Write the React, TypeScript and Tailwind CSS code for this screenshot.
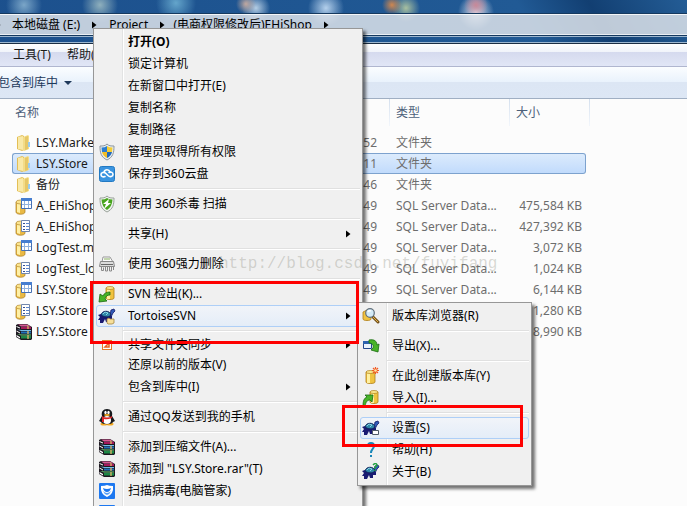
import type { ReactNode } from "react";

type FileKind = "folder" | "mdf" | "ldf" | "rar";

type FileRow = { name: string; time: string; kind: FileKind; type: string; size?: string; selected?: boolean };

type Entry = {
  label: string;
  icon?: ReactNode;
  submenu?: boolean;
  bold?: boolean;
  active?: boolean;
  compact?: boolean;
};

const FILES: FileRow[] = [
  { name: "LSY.Market", time: "52", kind: "folder", type: "文件夹" },
  { name: "LSY.Store", time: "11", kind: "folder", type: "文件夹", selected: true },
  { name: "备份", time: "46", kind: "folder", type: "文件夹" },
  { name: "A_EHiShop", time: "49", kind: "mdf", type: "SQL Server Data...", size: "475,584 KB" },
  { name: "A_EHiShop", time: "49", kind: "ldf", type: "SQL Server Data...", size: "427,392 KB" },
  { name: "LogTest.mdf", time: "49", kind: "mdf", type: "SQL Server Data...", size: "3,072 KB" },
  { name: "LogTest_log", time: "49", kind: "ldf", type: "SQL Server Data...", size: "1,024 KB" },
  { name: "LSY.Store", time: "49", kind: "mdf", type: "SQL Server Data...", size: "6,144 KB" },
  { name: "LSY.Store", time: "", kind: "ldf", type: "", size: "1,280 KB" },
  { name: "LSY.Store", time: "", kind: "rar", type: "", size: "8,990 KB" },
];

const ICON_CLS = "block h-[18px] w-[18px] shrink-0";

function FolderIcon() {
  return (
    <svg className={ICON_CLS} viewBox="0 0 18 18">
      <path d="M2 3l5-2 2 1v14l-2 1-5-2z" fill="#e3bf56" />
      <path d="M3 3l5-1v14l-5-1z" fill="#f9e9a8" />
      <path d="M8 3l5-2 1 1v13l-5 2-1-1z" fill="#f3dc88" />
      <path d="M10 3l3-1v13l-3 1z" fill="#e6c767" />
      <path d="M13 8h2v5h-2z" fill="#9accee" />
    </svg>
  );
}

function DatabaseIcon({ log }: { log?: boolean }) {
  return (
    <svg className={ICON_CLS} viewBox="0 0 18 18">
      <path d="M1 5v10c0 3 9 3 9 0V5z" fill="#e9b944" stroke="#a87a20" strokeWidth=".7" />
      <path d="M2 5v10l3 1V5z" fill="#fff0a6" />
      <ellipse cx="5.5" cy="5" rx="4.5" ry="2" fill="#fbe48d" stroke="#a87a20" strokeWidth=".6" />
      {log ? (
        <>
          <path d="M6.500 2.500h8v11h-8z" fill="#fff" stroke="#7187ad" />
          <path d="M8 5.500h2M8 8.500h2M8 11.500h2" stroke="#334f96" />
          <path d="M11 5.500h3M11 8.500h3M11 11.500h3" stroke="#5a86cf" />
        </>
      ) : (
        <>
          <path d="M6.500 1.500h10v10h-10z" fill="#fff" stroke="#4570b4" />
          <path d="M6 1h11v3H6z" fill="#467ed0" />
          <path d="M7 7.500h9M9.500 4v7M13.500 4v7" stroke="#91b2df" />
        </>
      )}
    </svg>
  );
}

function RarIcon() {
  return (
    <svg className={ICON_CLS} viewBox="0 0 18 18">
      <path d="M1 2l2-1h9l5 3v12l-1 1H6l-5-3z" fill="#1c1820" />
      <path d="M3 1.500h9l4 2H6z" fill="#d65a96" />
      <path d="M6 4h10v2H6z" fill="#a31a5c" />
      <path d="M1.500 3L5 4.500v1L1.500 4z" fill="#fff" />
      <path d="M2 6.500l4 1.500h10v-1H7z" fill="#76bce5" />
      <path d="M6 8.500h10v2H6z" fill="#1e70b8" />
      <path d="M1.500 7.500L5 9.500v1L1.500 8.500z" fill="#fff" />
      <path d="M2 11l4 1.500h10v-1H7z" fill="#6bcf78" />
      <path d="M6 13h10v2.500H6z" fill="#1b8746" />
      <path d="M1.500 12L5 14v1.500l-3.500-2z" fill="#fff" />
      <path d="M12 2l2 1.500V6h-2zM12 8h2v3h-2zM12 12h2v4h-2z" fill="#dfb965" opacity=".65" />
    </svg>
  );
}

function ShieldIcon() {
  return (
    <svg className={ICON_CLS} viewBox="0 0 18 18">
      <path d="M9 1c2 2 4 2 7 2 0 7-1 11-7 14C3 14 2 10 2 3c3 0 5 0 7-2z" fill="#e7edf0" stroke="#8b959d" />
      <path d="M9 3v6H4L3.500 4.500Q7 4.500 9 3z" fill="#2b7ed1" />
      <path d="M9 3q2 1.500 5.500 1.500L14 9H9z" fill="#f5ce35" />
      <path d="M4 9h5v6q-4-2-5-6z" fill="#f3bd25" />
      <path d="M9 9h5q-1 4-5 6z" fill="#2169bb" />
    </svg>
  );
}

function CloudDiskIcon() {
  return (
    <svg className={ICON_CLS} viewBox="0 0 18 18">
      <rect x="1.500" y="1.500" width="15" height="15" rx="2" fill="#3a94e0" stroke="#2279c2" />
      <path
        d="M7 11.500c-2 1-4 0-4-2s3-3 5-1l2 2c2 2 5 1 5-1s-2-3-4-2M6 7c1-3 5-3 6 0"
        fill="none"
        stroke="#fff"
        strokeWidth="1.600"
        strokeLinecap="round"
      />
    </svg>
  );
}

function GreenShieldIcon() {
  return (
    <svg className={ICON_CLS} viewBox="0 0 18 18">
      <path d="M9 1c2 2 4 2 7 2 0 7-1 11-7 14C3 14 2 10 2 3c3 0 5 0 7-2z" fill="#eef2ee" stroke="#9aa29b" />
      <path d="M9 3q2 1.500 5.500 1.500Q14 12 9 15 4 12 3.500 4.500 7 4.500 9 3z" fill="#48a51e" />
      <path d="M11 4L5 9h3l-2 5 7-6h-3z" fill="#fff" />
    </svg>
  );
}

function ShredderIcon() {
  return (
    <svg className={ICON_CLS} viewBox="0 0 18 18">
      <path d="M4 7l1-5h7l3 5z" fill="#fafafa" stroke="#999" />
      <path d="M6 4h6" stroke="#88b060" />
      <path d="M2.500 6.500h13l1 5h-15z" fill="#dcdcdc" stroke="#888" />
      <path d="M3 9.500h12" stroke="#666" />
      <path d="M3.500 12v3.500h2v-3M7.500 12v4h2v-4M11.500 12v4h2v-4M15.500 12v3" fill="none" stroke="#888" />
    </svg>
  );
}

function Cylinder() {
  return (
    <>
      <path d="M8 3v10c0 2 8 2 8 0V3z" fill="#f0c340" stroke="#ae7c16" strokeWidth=".8" />
      <path d="M9 4h3v10H9z" fill="#fff0a0" />
      <ellipse cx="12" cy="3" rx="4" ry="1.500" fill="#fbe78d" stroke="#ae7c16" strokeWidth=".7" />
    </>
  );
}

function CheckoutIcon() {
  return (
    <svg className={ICON_CLS} viewBox="0 0 18 18">
      <Cylinder />
      <path d="M12 7c-3 0-6 1-7 4L2 9 1 17l8-1-2-2c1-3 2-4 5-4z" fill="#48b428" stroke="#1b6b12" strokeWidth=".8" />
    </svg>
  );
}

function ImportIcon() {
  return (
    <svg className={ICON_CLS} viewBox="0 0 18 18">
      <Cylinder />
      <path d="M1 17c0-5 1-8 4-9L3 6l8 0-1 7-2-2c-3 0-4 2-5 6z" fill="#48b428" stroke="#1b6b12" strokeWidth=".8" />
    </svg>
  );
}

function CreateRepoIcon() {
  return (
    <svg className={ICON_CLS} viewBox="0 0 18 18">
      <path d="M4 5v10c0 2 9 2 9 0V5z" fill="#f0c340" stroke="#ae7c16" strokeWidth=".8" />
      <path d="M5 6h3v10H5z" fill="#fff0a0" />
      <ellipse cx="8.500" cy="5" rx="4.500" ry="1.500" fill="#fbe78d" stroke="#ae7c16" strokeWidth=".7" />
      <path d="M13.500 0v7M10 3.500h7M11 1l5 5M16 1l-5 5" stroke="#f15a24" strokeWidth="1.200" />
      <circle cx="13.500" cy="3.500" r="1.300" fill="#ffe8a0" />
    </svg>
  );
}

function RepoBrowserIcon() {
  return (
    <svg className={ICON_CLS} viewBox="0 0 18 18">
      <path d="M1 5v7c0 2 8 2 8 0V4L5 3z" fill="#f0c340" stroke="#ae7c16" strokeWidth=".8" />
      <path d="M11 10l5 5" stroke="#75521d" strokeWidth="3" strokeLinecap="round" />
      <path d="M11 10l5 5" stroke="#e4b648" strokeWidth="1" />
      <circle cx="8" cy="6" r="4.300" fill="#d3ebf8" stroke="#61707c" strokeWidth="1.200" />
      <path d="M6 5q1-2 3-1" fill="none" stroke="#fff" strokeWidth="1.500" />
    </svg>
  );
}

function ExportIcon() {
  return (
    <svg className={ICON_CLS} viewBox="0 0 18 18">
      <path d="M1.500 4.500h8v7h-8z" fill="#e9f3fc" stroke="#23488b" />
      <path d="M1 4h9v3H1z" fill="#2c62ae" />
      <path d="M7 3c5-1 8 1 8 5l2-1-1 8-7-2 2-2c1-3-1-5-4-5z" fill="#48b428" stroke="#1b6b12" strokeWidth=".8" />
    </svg>
  );
}

function TurtleIcon({ badge }: { badge: "folder" | "window" | "question" }) {
  return (
    <svg className={ICON_CLS} viewBox="0 0 18 18">
      <path d="M0 8l3-1 11 2v3l-3 0 0 3H8l-1-3-2 4-3 0 0-3-2 0 2-3z" fill="#191a72" />
      <path d="M12 8l1-5 3-1 1 2-2 2-2 4z" fill="#2f5ab8" stroke="#151a68" strokeWidth=".8" />
      <path d="M3 8c1-5 9-5 10 0-3 3-7 2-10 0z" fill="#2f86a8" stroke="#11235d" />
      <path d="M5 7l2-2 3 1M8 8l2-2" fill="none" stroke="#84d5e2" />
      {badge === "folder" && <path d="M9 12l2-1 1 1h4v4l-2 1h-4l-1-1z" fill="#f6df9b" stroke="#a58540" strokeWidth=".8" />}
      {badge === "window" && <path d="M10.500 11.500h6v4h-6z" fill="#fff" stroke="#4e5966" />}
      {badge === "question" && <path d="M11 2q3-3 4 0 0 1-2 2v2M13 7v1" fill="none" stroke="#23a343" strokeWidth="1.500" />}
    </svg>
  );
}

function HelpIcon() {
  return (
    <svg className={ICON_CLS} viewBox="0 0 18 18">
      <path d="M6 5c0-4 6-4 6 0 0 3-3 3-3 7M9 14v2" fill="none" stroke="#1987b8" strokeWidth="2" />
    </svg>
  );
}

function SyncIcon() {
  return (
    <svg className={ICON_CLS} viewBox="0 0 18 18">
      <rect x="4.500" y="4.500" width="9" height="9" fill="#fff" stroke="#e57a24" />
      <path d="M7 7h4v4H7l3-3" fill="none" stroke="#e5631d" strokeWidth="1.500" />
    </svg>
  );
}

function QQIcon() {
  return (
    <svg className={ICON_CLS} viewBox="0 0 18 18">
      <ellipse cx="6" cy="16" rx="3.500" ry="1.500" fill="#f4aa22" />
      <ellipse cx="12" cy="16" rx="3.500" ry="1.500" fill="#f4aa22" />
      <path d="M4 8C3 4 5 1 9 1s6 3 5 7l3 5-2 1c-1 3-11 3-12 0l-2-1z" fill="#17191d" />
      <ellipse cx="9" cy="12" rx="4" ry="4" fill="#fff" />
      <ellipse cx="7.500" cy="4.500" rx="1.200" ry="1.700" fill="#fff" />
      <ellipse cx="10.500" cy="4.500" rx="1.200" ry="1.700" fill="#fff" />
      <ellipse cx="9" cy="7" rx="3" ry="1" fill="#f4aa22" />
      <path d="M4 8q5 3 10 0v2q-5 2-8 1v3H4z" fill="#dc2628" />
    </svg>
  );
}

function GuardIcon() {
  return (
    <svg className={ICON_CLS} viewBox="0 0 18 18">
      <rect x="1" y="1" width="16" height="16" rx="1" fill="#1d78f0" />
      <path d="M3 4q4 0 6-1 2 1 6 1 1 8-6 11Q2 12 3 4z" fill="#fff" />
      <path d="M5 6q4 2 8 0-1 4-4 4T5 6z" fill="#1d78f0" />
      <path d="M5 9q4 4 8 0-1 3-4 4-3-1-4-4z" fill="#5ba0f5" />
    </svg>
  );
}

const FILE_ICONS: Record<FileKind, ReactNode> = {
  folder: <FolderIcon />,
  mdf: <DatabaseIcon />,
  ldf: <DatabaseIcon log />,
  rar: <RarIcon />,
};

// Each inner array is a group; groups are divided by a separator.
const MAIN_MENU: Entry[][] = [
  [
    { label: "打开(O)", bold: true },
    { label: "锁定计算机" },
    { label: "在新窗口中打开(E)" },
    { label: "复制名称" },
    { label: "复制路径" },
    { label: "管理员取得所有权限", icon: <ShieldIcon /> },
    { label: "保存到360云盘", icon: <CloudDiskIcon /> },
  ],
  [{ label: "使用 360杀毒 扫描", icon: <GreenShieldIcon /> }],
  [{ label: "共享(H)", submenu: true }],
  [{ label: "使用 360强力删除", icon: <ShredderIcon /> }],
  [
    { label: "SVN 检出(K)...", icon: <CheckoutIcon /> },
    { label: "TortoiseSVN", icon: <TurtleIcon badge="folder" />, submenu: true, active: true },
  ],
  [
    { label: "共享文件夹同步", icon: <SyncIcon />, submenu: true, compact: true },
    { label: "还原以前的版本(V)" },
    { label: "包含到库中(I)", submenu: true },
  ],
  [{ label: "通过QQ发送到我的手机", icon: <QQIcon /> }],
  [
    { label: "添加到压缩文件(A)...", icon: <RarIcon /> },
    { label: "添加到 \"LSY.Store.rar\"(T)", icon: <RarIcon /> },
    { label: "扫描病毒(电脑管家)", icon: <GuardIcon /> },
    { label: "", icon: <GuardIcon /> },
  ],
];

const SVN_MENU: Entry[][] = [
  [{ label: "版本库浏览器(R)", icon: <RepoBrowserIcon /> }],
  [{ label: "导出(X)...", icon: <ExportIcon /> }],
  [
    { label: "在此创建版本库(Y)", icon: <CreateRepoIcon /> },
    { label: "导入(I)...", icon: <ImportIcon /> },
  ],
  [
    { label: "设置(S)", icon: <TurtleIcon badge="window" />, active: true },
    { label: "帮助(H)", icon: <HelpIcon /> },
    { label: "关于(B)", icon: <TurtleIcon badge="question" /> },
  ],
];

function Arrow() {
  return (
    <svg className="block h-2 w-[5px] shrink-0" viewBox="0 0 5 8">
      <path d="M0 .5L4.500 4 0 7.500z" fill="#000" />
    </svg>
  );
}

function MenuItem({ entry }: { entry: Entry }) {
  return (
    <button
      type="button"
      role="menuitem"
      className={`flex w-full items-center rounded-[3px] border pr-2 pl-px text-left ${entry.compact ? "h-[19px]" : "h-[22px]"} ${
        entry.active ? "border-[#aecff7] bg-linear-to-b from-[#f1f4f9] to-[#e4edf8]" : "border-transparent"
      } ${entry.bold ? "font-bold" : ""}`}
    >
      <span className="mr-3 flex w-[18px] shrink-0 justify-center">{entry.icon}</span>
      <span className="flex-1 whitespace-nowrap">{entry.label}</span>
      {entry.submenu && <Arrow />}
    </button>
  );
}

function Menu({ groups, label }: { groups: Entry[][]; label: string }) {
  return (
    <div
      role="menu"
      aria-label={label}
      className="border border-[#979797] bg-[#f0f0f0] bg-[linear-gradient(to_right,transparent_28px,#e2e3e3_28px,#e2e3e3_29px,#fff_29px,#fff_30px,transparent_30px)] p-0.5 text-black shadow-[3px_3px_3px_rgba(0,0,0,0.55)]"
    >
      {groups.map((group, i) => (
        <div key={i}>
          {i > 0 && (
            <div className="flex h-2 items-center pl-[27px]">
              <div className="h-0.5 w-full border-t border-b border-t-[#e0e0e0] border-b-white" />
            </div>
          )}
          {group.map((entry) => (
            <MenuItem key={entry.label} entry={entry} />
          ))}
        </div>
      ))}
    </div>
  );
}

function HeaderCell({ children, divider }: { children?: ReactNode; divider?: boolean }) {
  return (
    <th className="h-[33px] p-0 text-left align-top font-normal">
      <div
        className={`flex h-[27px] items-center ${
          divider ? "bg-[linear-gradient(to_bottom,#d5e0ee,#f2f6fb)] bg-[length:1px_100%] bg-no-repeat pl-[7px]" : "pl-[3px]"
        }`}
      >
        {children}
      </div>
    </th>
  );
}

const SELECTED_CLS = "border-y border-[#7da2ce] bg-linear-to-b from-[#dcebfc] to-[#c1dbfc]";

function FileTable() {
  return (
    <table className="w-full table-fixed border-separate border-spacing-0 text-[#6d6d6d]">
      <colgroup>
        <col className="w-[287px]" />
        <col className="w-[90px]" />
        <col className="w-[120px]" />
        <col className="w-[77px]" />
        <col className="w-[3px]" />
        <col />
      </colgroup>
      <thead className="text-[#4c607a]">
        <tr>
          <HeaderCell>名称</HeaderCell>
          <HeaderCell />
          <HeaderCell divider>类型</HeaderCell>
          <HeaderCell divider>大小</HeaderCell>
          <HeaderCell />
          <HeaderCell divider />
        </tr>
      </thead>
      <tbody>
        {FILES.map((file, i) => (
          <tr key={i}>
            <td className={`h-[21px] p-0 ${file.selected ? `rounded-l-[3px] border-l ${SELECTED_CLS}` : ""}`}>
              <div className={`flex h-[19px] items-center gap-[3px] text-[#1a1a1a] ${file.selected ? "pl-0.5" : "pl-[3px]"}`}>
                {FILE_ICONS[file.kind]}
                <span className="whitespace-nowrap">{file.name}</span>
              </div>
            </td>
            <td className={`p-0 pr-3 text-right ${file.selected ? SELECTED_CLS : ""}`}>{file.time}</td>
            <td className={`p-0 pl-[7px] whitespace-nowrap ${file.selected ? SELECTED_CLS : ""}`}>{file.type}</td>
            <td className={`p-0 pr-1 text-right whitespace-nowrap ${file.selected ? `rounded-r-[3px] border-r ${SELECTED_CLS}` : ""}`}>
              {file.size}
            </td>
          </tr>
        ))}
      </tbody>
    </table>
  );
}

export default function App() {
  return (
    <div className="relative h-screen overflow-hidden bg-[#fcfcfc] font-['Noto_Sans','Noto_Sans_CJK_SC',sans-serif] text-[12px] leading-4">
      {/* Window frame with the desktop showing through */}
      <header className="bg-[#1f5590] bg-[radial-gradient(circle_at_24px_5px,#7ba6c8_0,transparent_18px),radial-gradient(circle_at_100px_5px,#8fb0bd_0,transparent_18px),radial-gradient(circle_at_176px_3px,#64a5cb_0,transparent_20px),radial-gradient(circle_at_246px_4px,#c0a8a0_0,transparent_10px),radial-gradient(circle_at_256px_8px,#b4cde4_0,transparent_14px),radial-gradient(circle_at_326px_8px,#b4d0ec_0,transparent_18px),radial-gradient(circle_at_392px_5px,#d08850_0,transparent_10px),radial-gradient(circle_at_406px_8px,#a8c0a0_0,transparent_14px),radial-gradient(circle_at_476px_5px,#c88898_0,transparent_12px),radial-gradient(circle_at_476px_12px,#e0e4f0_0,transparent_18px),linear-gradient(60deg,#1c508d_0%,#215a95_76%,#123f72_86%,#245d96_100%)]">
        <div className="h-[13px]" />
        <nav className="flex h-[23px] items-center border-y border-[#15395f] bg-[#dde3ea]/85 text-black shadow-[inset_0_1px_0_#ffffffcc,inset_0_-1px_0_#ffffffaa]">
          <span className="-ml-1"><Arrow /></span>
          <a href="#" className="ml-[11px]">本地磁盘 (E:)</a>
          <span className="mr-3 ml-3"><Arrow /></span>
          <a href="#">Project</a>
          <span className="mr-2 ml-3"><Arrow /></span>
          <a href="#">(电商权限修改后)EHiShop</a>
          <span className="ml-3"><Arrow /></span>
        </nav>
        <div className="h-2 border-t border-b border-t-[#9db7d0] border-b-[#1b2e44] shadow-[inset_0_-1px_0_#9db7d0]" />
      </header>

      <div className="flex h-[23px] items-center gap-4 border-b border-[#b0b6cf] bg-[linear-gradient(to_bottom,#fff_0,#f0f3fa_8px,#d5daee_8px,#e1e6f6_100%)] pl-[13px] text-[#1a1a1a]">
        <button type="button">工具(T)</button>
        <button type="button">帮助(H)</button>
      </div>
      <div className="flex h-8 items-center border-b border-[#a0afc3] bg-[linear-gradient(to_bottom,#fbfdff_0,#e9f2fc_15px,#dce6f4_15px,#dde7f5_100%)]">
        <button type="button" className="-ml-0.5 flex items-center gap-1.5 text-[#1e395b]">
          包含到库中
          <svg className="h-1 w-2" viewBox="0 0 8 4">
            <path d="M0 0h8L4 4z" fill="#1e395b" />
          </svg>
        </button>
      </div>

      <main className="pl-3">
        <FileTable />
      </main>

      <div className="absolute top-[28px] left-[93px] w-[270px]">
        <Menu groups={MAIN_MENU} label="LSY.Store" />
      </div>
      <div className="absolute top-[302px] left-[357px] w-[175px]">
        <Menu groups={SVN_MENU} label="TortoiseSVN" />
      </div>

      {/* Callouts and watermark */}
      <div className="pointer-events-none absolute top-[281px] left-[90px] h-[63px] w-[269px] border-3 border-[#fe0000]" />
      <div className="pointer-events-none absolute top-[405px] left-[342px] h-[42px] w-[181px] border-3 border-[#fe0000]" />
      <div className="pointer-events-none absolute top-[252px] left-[219px] font-['Liberation_Mono',monospace] text-[16px] leading-6 text-[#808070]/30">
        http://blog.csdn.net/fuyifang
      </div>
    </div>
  );
}
